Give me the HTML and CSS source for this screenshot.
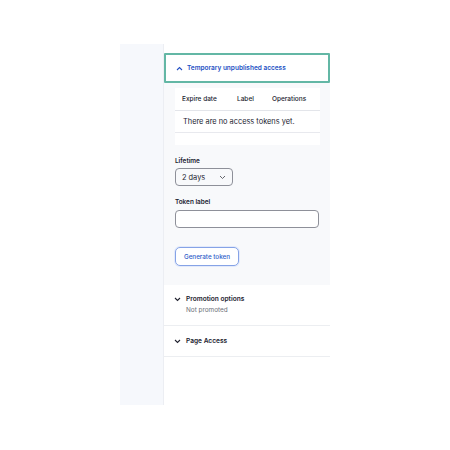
FILE: index.html
```html
<!DOCTYPE html>
<html>
<head>
<meta charset="utf-8">
<link rel="stylesheet" href="styles.css">
</head>
<body>
<div class="frame">
  <div class="sidebar"></div>
  <div class="main">
    <div class="summary open">
      <svg class="chev" width="7" height="5" viewBox="0 0 7 5"><path d="M1 4L3.5 1.5L6 4" fill="none" stroke="#2451c4" stroke-width="1.1"/></svg>
      <span>Temporary unpublished access</span>
    </div>
    <div class="content">
      <div class="card">
        <div class="thead">
          <span class="c1">Expire date</span>
          <span class="c2">Label</span>
          <span class="c3">Operations</span>
        </div>
        <div class="trow">There are no access tokens yet.</div>
      </div>
      <div class="field">
        <div class="label">Lifetime</div>
        <div class="select">
          <span>2 days</span>
          <svg width="7" height="5" viewBox="0 0 7 5"><path d="M1 1L3.5 3.5L6 1" fill="none" stroke="#55565e" stroke-width="0.9"/></svg>
        </div>
      </div>
      <div class="field f2">
        <div class="label">Token label</div>
        <div class="input"></div>
      </div>
      <div class="btn">Generate token</div>
    </div>
    <div class="section">
      <div class="shead">
        <svg width="7" height="5" viewBox="0 0 7 5"><path d="M1 1L3.5 3.5L6 1" fill="none" stroke="#222330" stroke-width="1.1"/></svg>
        <span>Promotion options</span>
      </div>
      <div class="ssub">Not promoted</div>
    </div>
    <div class="section s2">
      <div class="shead">
        <svg width="7" height="5" viewBox="0 0 7 5"><path d="M1 1L3.5 3.5L6 1" fill="none" stroke="#222330" stroke-width="1.1"/></svg>
        <span>Page Access</span>
      </div>
    </div>
  </div>
</div>
</body>
</html>
```

FILE: styles.css
```css
* { box-sizing: border-box; }
html, body { margin: 0; padding: 0; background: #fff; }
body { font-family: Inter, "Noto Sans", sans-serif; color: #222330; }
.frame { display: flex; margin: 44px 0 0 120px; height: 361px; }
.sidebar { width: 44px; background: #f6f8fc; border-right: 1px solid #eceef3; }
.main { width: 166px; padding-top: 9px; }
.summary { height: 30px; border: 2px solid #63b7a5; border-radius: 1px; display: flex; align-items: center; padding-left: 10px; gap: 4px; color: #2451c4; font-size: 6.5px; font-weight: 600; }
.chev { flex: none; }
.content { background: #f8f9fb; height: 202px; padding: 5px 10px 0 11px; }
.card { background: #fff; height: 57px; }
.thead { height: 23px; display: flex; align-items: center; border-bottom: 1px solid #e3e5ea; font-size: 6.5px; font-weight: 500; }
.thead span { display: block; }
.c1 { padding-left: 7px; width: 62px; }
.c2 { width: 35px; }
.trow { height: 22px; border-bottom: 1px solid #e8e9ee; display: flex; align-items: center; padding-left: 8px; font-size: 7.4px; }
.field { margin-top: 12px; }
.label { font-size: 6.4px; font-weight: 600; height: 8px; line-height: 8px; }
.select { margin-top: 3px; width: 58px; height: 18px; border: 1px solid #8e9099; border-radius: 4px; display: flex; align-items: center; justify-content: space-between; padding: 0 6px 0 6px; font-size: 7.4px; }
.f2 { margin-top: 12px; }
.input { margin-top: 4px; width: 144px; height: 18px; border: 1px solid #8e9099; border-radius: 4px; background: #fff; }
.btn { margin-top: 19px; width: 64px; height: 19px; border: 1px solid #86a3e6; border-radius: 5px; background: #fff; color: #2e5bc9; font-size: 6.3px; font-weight: 500; display: flex; align-items: center; justify-content: center; box-shadow: 0 0 0 1px #e3eafb; }
.section { height: 41px; border-bottom: 1px solid #eceef1; padding: 10px 0 0 10px; }
.shead { display: flex; align-items: center; gap: 5px; font-size: 6.6px; font-weight: 600; height: 8px; }
.ssub { padding-left: 12px; margin-top: 3px; font-size: 6.4px; color: #6c6f78; }
.s2 { height: 31px; padding-top: 11px; }
```
